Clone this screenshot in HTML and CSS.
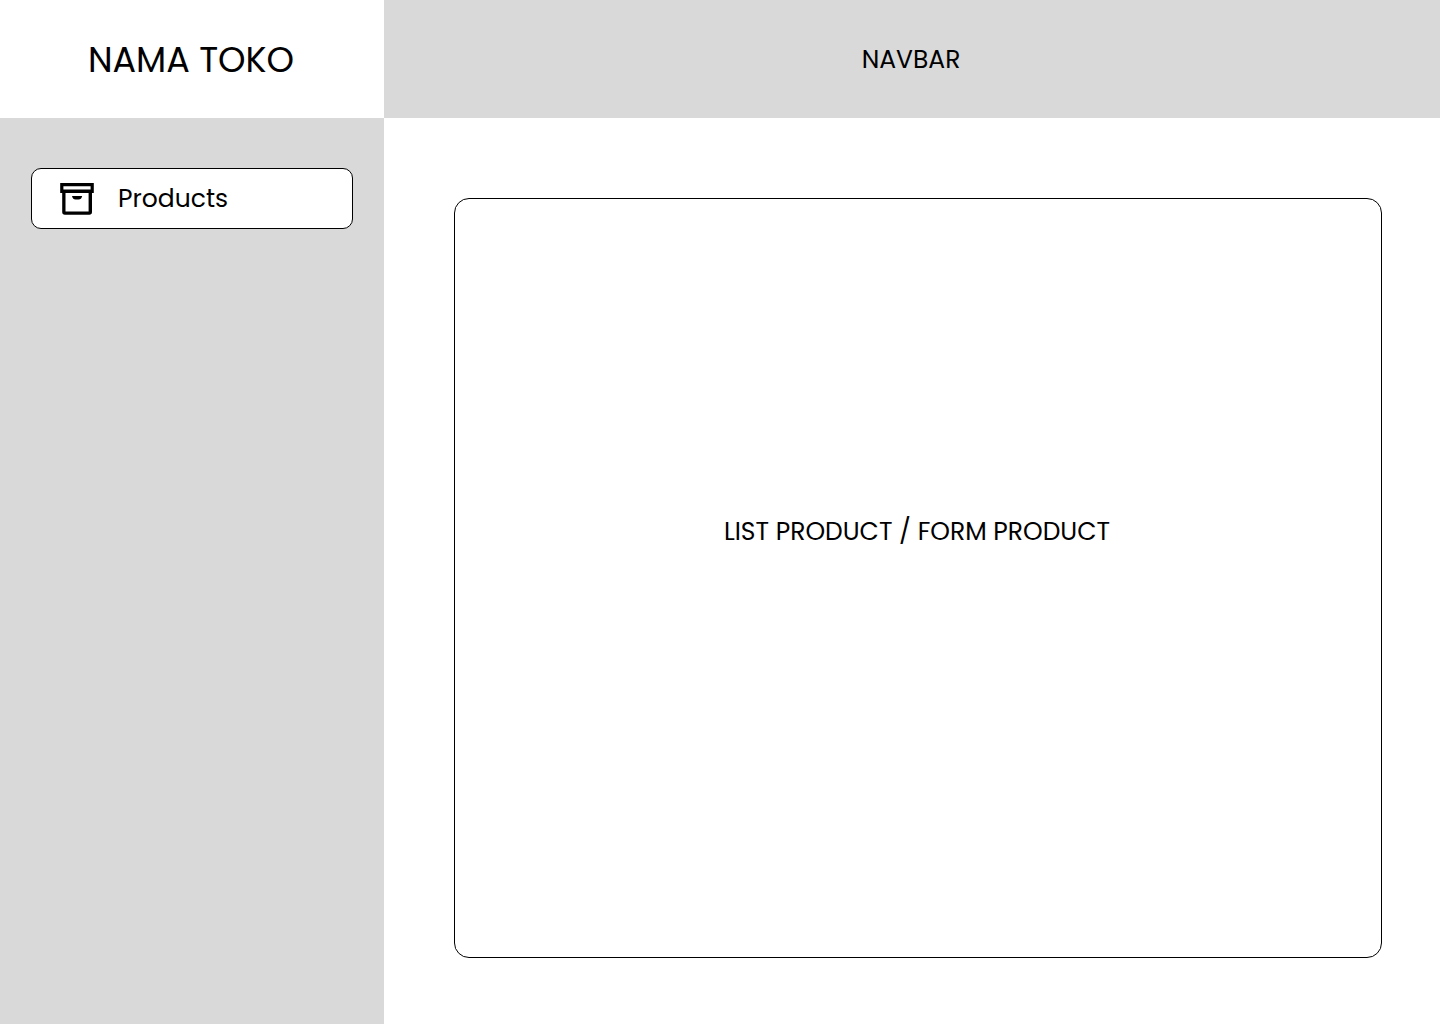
FILE: index.html
```html
<!DOCTYPE html>
<html lang="id">
<head>
<meta charset="utf-8">
<meta name="viewport" content="width=device-width, initial-scale=1">
<title>Nama Toko</title>
<link rel="stylesheet" href="styles.css">
</head>
<body>
<div class="app">
  <div class="brand"><h1 class="brand-name">NAMA TOKO</h1></div>
  <header class="navbar">NAVBAR</header>
  <nav class="sidebar">
    <a class="nav-link" href="#products">
      <svg class="nav-icon" viewBox="0 0 34 32" aria-hidden="true">
        <path fill="#000" fill-rule="evenodd" d="M.2 0H33.8V10H32V29Q32 31.7 29.3 31.7H4.9Q2.2 31.7 2.2 29V10H.2ZM3.4 3.3V6.6H30.6V3.3ZM5.5 10V28.4H28.6V10Z"/>
        <path fill="#000" d="M12 13H22.2Q21.4 16.5 18.5 16.5H15.6Q12.8 16.5 12 13Z"/>
      </svg>
      <span>Products</span>
    </a>
  </nav>
  <main class="content">
    <section class="panel" id="products">LIST PRODUCT / FORM PRODUCT</section>
  </main>
</div>
</body>
</html>
```
FILE: styles.css
```css
* { box-sizing: border-box; }

body {
  margin: 0;
  font-family: Poppins, Inter, sans-serif;
  font-size: 25px;
  line-height: 38px;
  color: #000;
  background: #fff;
}

.app {
  display: grid;
  grid-template-columns: 384px 1fr;
  grid-template-rows: 118px 1fr;
  min-height: 100vh;
}

.brand,
.navbar {
  display: flex;
  align-items: center;
  justify-content: center;
  padding: 2px 2px 0 0;
}

.brand-name {
  margin: 0;
  font-size: 35px;
  font-weight: 400;
  line-height: 54px;
}

.navbar,
.sidebar {
  background: #d9d9d9;
}

.sidebar { padding: 50px 31px; }

.nav-link {
  display: flex;
  align-items: center;
  gap: 24px;
  height: 61px;
  padding: 0 28px;
  border: 1px solid #000;
  border-radius: 10px;
  background: #fff;
  color: inherit;
  text-decoration: none;
}

.nav-icon {
  width: 34px;
  height: 32px;
}

.content {
  display: flex;
  padding: 80px 58px 66px 70px;
}

.panel {
  flex: 1;
  display: flex;
  align-items: center;
  justify-content: center;
  padding: 0 2px 92px 0;
  border: 1px solid #000;
  border-radius: 15px;
}
```
